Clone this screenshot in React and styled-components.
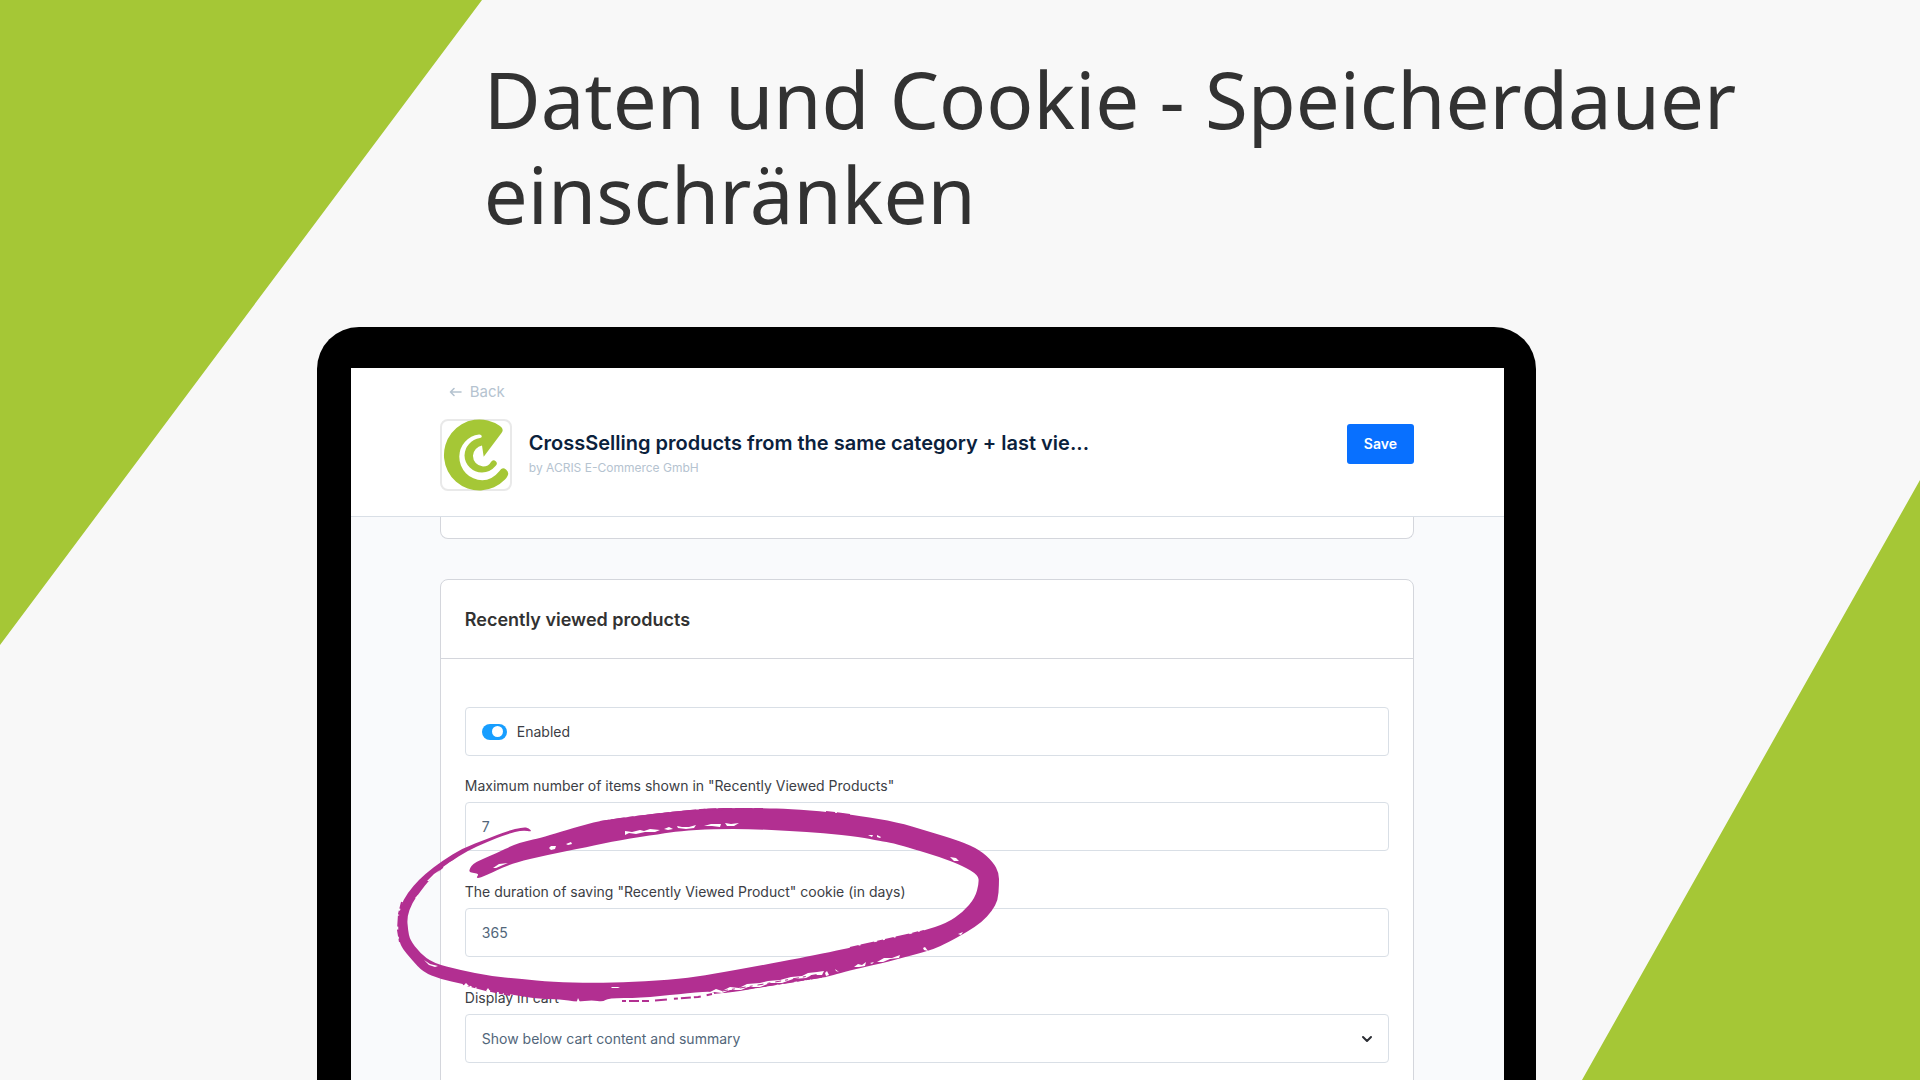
import React, { useId } from 'react'
import styled, { createGlobalStyle, css } from 'styled-components'

const color = {
  page: '#f8f8f8',
  green: '#a5c736',
  ink: '#323232',
  title: '#0b213c',
  label: '#3c3e45',
  value: '#52667a',
  muted: '#b5c3d0',
  line: '#d9dfe6',
  cardLine: '#d4d6dc',
  surface: '#f9fafc',
  save: '#0870ff',
  toggle: '#189eff',
  marker: '#b22f91'
}

const GlobalStyle = createGlobalStyle`
  *, *::before, *::after {
    box-sizing: border-box;
  }

  body {
    margin: 0;
    font-family: Inter, "Liberation Sans", sans-serif;
    background-color: ${color.page};
  }
`

const Slide = styled.main`
  position: relative;
  display: flex;
  flex-direction: column;
  height: 100vh;
  overflow: hidden;
`

const Backdrop = styled.svg`
  position: absolute;
  inset: 0;
  width: 100%;
  height: 100%;
  fill: ${color.green};
`

const Headline = styled.h1`
  position: relative;
  margin: 0;
  padding: 52px 24px 0 25.2%;
  font-family: "Noto Sans", "Open Sans", sans-serif;
  font-size: 78px;
  font-weight: 400;
  line-height: 95px;
  color: ${color.ink};
`

const Device = styled.div`
  position: relative;
  display: flex;
  flex-direction: column;
  flex: 1;
  min-height: 0;
  margin: 85px 20% 0 16.5%;
  padding: 41px 32px 0 34px;
  border-radius: 42px 42px 0 0;
  background-color: #000;
`

const Screen = styled.div`
  flex: 1;
  min-height: 0;
  overflow: hidden;
  background-color: ${color.surface};
`

const gutter = css`
  padding-left: 89px;
  padding-right: 90px;
`

const Header = styled.header`
  ${gutter}
  padding-top: 14px;
  padding-bottom: 25px;
  background-color: #fff;
  border-bottom: 1px solid ${color.line};
`

const BackLink = styled.a`
  display: inline-flex;
  align-items: center;
  gap: 8px;
  margin-left: 9px;
  font-size: 15px;
  line-height: 20px;
  color: ${color.muted};
  text-decoration: none;
  vertical-align: top;
`

const Plugin = styled.div`
  display: flex;
  align-items: flex-start;
  gap: 17px;
  margin-top: 17px;
`

const PluginIcon = styled.div`
  width: 72px;
  height: 72px;
  flex: none;
  border: 2px solid #e9e9e9;
  border-radius: 8px;

  svg {
    display: block;
    margin: -2px;
  }
`

const PluginText = styled.div`
  flex: 1;
  min-width: 0;
  padding-top: 11px;
`

const PluginTitle = styled.h2`
  margin: 0;
  font-size: 20px;
  font-weight: 600;
  line-height: 26px;
  color: ${color.title};
  white-space: nowrap;
  overflow: hidden;
  text-overflow: ellipsis;
`

const PluginAuthor = styled.p`
  margin: 2px 0 0;
  font-size: 12px;
  line-height: 20px;
  color: ${color.muted};
`

const SaveButton = styled.button`
  margin-top: 5px;
  padding: 0 17px;
  border: 0;
  border-radius: 3px;
  font: 600 14px/40px Inter, sans-serif;
  color: #fff;
  background-color: ${color.save};
  cursor: pointer;
`

const Content = styled.div`
  ${gutter}
`

const Card = styled.section`
  background-color: #fff;
  border: 1px solid ${color.cardLine};
  border-radius: 8px;
`

const CardEnd = styled(Card)`
  height: 22px;
  margin-bottom: 40px;
  border-top: 0;
  border-radius: 0 0 8px 8px;
`

const CardTitle = styled.h3`
  margin: 0;
  padding: 2px 24px 0;
  font-size: 18px;
  font-weight: 600;
  line-height: 76px;
  color: ${color.ink};
  border-bottom: 1px solid ${color.cardLine};
`

const CardBody = styled.div`
  padding: 48px 24px;
`

const box = css`
  display: block;
  width: 100%;
  height: 49px;
  padding: 0 16px;
  border: 1px solid ${color.line};
  border-radius: 4px;
  background-color: #fff;
`

const SwitchRow = styled.label`
  ${box}
  display: flex;
  align-items: center;
  gap: 10px;
  margin-bottom: 20px;
  font-size: 14px;
  color: ${color.label};
`

const Switch = styled.input.attrs({ type: 'checkbox' })`
  appearance: none;
  display: flex;
  align-items: center;
  width: 25px;
  height: 16px;
  margin: 0;
  padding: 0 4px;
  border-radius: 8px;
  background-color: ${color.muted};

  &::before {
    content: "";
    width: 11px;
    height: 11px;
    border-radius: 50%;
    background-color: #fff;
  }

  &:checked {
    justify-content: flex-end;
    background-color: ${color.toggle};
  }
`

const FieldGroup = styled.div`
  position: relative;
  margin-bottom: 31px;
`

const Label = styled.label`
  display: block;
  margin-bottom: 6px;
  font-size: 14px;
  line-height: 20px;
  color: ${color.label};
`

const value = css`
  ${box}
  font: 400 14px/20px Inter, sans-serif;
  color: ${color.value};
`

const TextInput = styled.input`
  ${value}
`

const Select = styled.select`
  ${value}
  appearance: none;
`

const SelectWrap = styled.div`
  display: grid;
  align-items: center;

  > * {
    grid-area: 1 / 1;
  }

  svg {
    justify-self: end;
    margin-right: 16px;
    pointer-events: none;
  }
`

const Marker = styled.svg`
  position: absolute;
  top: -82px;
  left: -75px;
  z-index: 1;
  pointer-events: none;
`

const Field = ({ label, children, render }) => {
  const id = useId()

  return (
    <FieldGroup>
      <Label htmlFor={id}>{label}</Label>
      {render(id)}
      {children}
    </FieldGroup>
  )
}

const Logo = () => (
  <svg width="72" height="72" viewBox="0 1 72 72" fill={color.green} aria-hidden="true">
    <path d="M60 8Q64.500 11 61.500 15L43.700 38.700L42 27.500A11 11 0 0 0 33 37.500A10.500 10.500 0 0 0 43 48.500Q48.500 48.500 51 44Q53 41 56 43.500Q58 45.500 55.500 48Q50 54.500 42 54.500A17.500 17.500 0 0 1 24.500 37.500A18 18 0 0 1 40 20Q42 19.800 41.700 18Q41.500 16.300 39 16.500A22.500 22.500 0 0 0 19.300 38.500A23.500 23.500 0 0 0 42.300 62.300Q52 62.300 59.500 53Q62 48.500 66 51.500Q69.500 54.500 67.500 58Q66 61 65 61.600A35.500 35.500 0 1 1 60 8Z" />
  </svg>
)

const ArrowLeft = () => (
  <svg width="13" height="10" viewBox="0 0 13 10" fill="none" stroke="currentColor" strokeWidth="1.600" strokeLinecap="round" strokeLinejoin="round" aria-hidden="true">
    <path d="M12 5H1.500M5 1.500L1.500 5L5 8.500" />
  </svg>
)

const Chevron = () => (
  <svg width="12" height="8" viewBox="0 0 12 8" fill="none" stroke="#2b2d33" strokeWidth="2" strokeLinecap="round" strokeLinejoin="round" aria-hidden="true">
    <path d="M2 2L6 6L10 2" />
  </svg>
)

// Outline of the marker loop: outer edge first, then back along the inner edge
const loop = [
  [469, 872], [470, 868], [473, 864], [480, 860], [497, 853], [513, 845], [526, 841], [540, 838],
  [560, 832], [587, 824], [600, 821], [620, 818], [660, 813], [700, 809], [723, 808], [763, 808],
  [790, 809], [830, 812], [860, 816], [897, 822], [927, 831], [960, 841], [980, 850],
  [993, 862], [999, 873], [999, 885], [998, 900], [992, 911], [982, 922], [967, 932],
  [947, 943], [934, 949], [920, 953], [887, 962], [860, 968], [840, 973], [827, 977], [793, 982],
  [763, 987], [740, 991], [717, 994], [711, 991], [680, 994], [640, 998], [608, 998],
  [603, 1002], [592, 1000], [577, 1002], [560, 999], [540, 999], [513, 995], [487, 990], [463, 984],
  [440, 979], [423, 972], [412, 960], [402, 948], [399, 940], [398, 930], [399, 913], [403, 900],
  [413, 886], [425, 874], [442, 861], [463, 848], [487, 839], [507, 831], [523, 827],
  [529, 828], [532, 832], [523, 830], [507, 834], [487, 842], [467, 851], [450, 862],
  [430, 879], [420, 892], [412, 903], [407, 917], [408, 930], [410, 940], [420, 953],
  [433, 963], [460, 970], [490, 976], [520, 979], [553, 982], [593, 983], [633, 982],
  [680, 979], [713, 974], [763, 965], [800, 958], [830, 952], [853, 947], [893, 938],
  [923, 931], [947, 923], [963, 912], [975, 898], [979, 883], [978, 875], [963, 866],
  [940, 857], [913, 849], [893, 843], [880, 841], [860, 837], [823, 833], [790, 831],
  [753, 829], [713, 829], [680, 831], [660, 834], [620, 840], [587, 847], [547, 855],
  [513, 863], [493, 872], [480, 878], [476, 878], [479, 874], [474, 873]
]

const smooth = points => {
  const mid = (a, b) => `${(a[0] + b[0]) / 2} ${(a[1] + b[1]) / 2}`
  const last = points[points.length - 1]
  const curves = points.map((p, i) =>
    `Q${p[0]} ${p[1]} ${mid(p, points[(i + 1) % points.length])}`
  )
  return `M${mid(last, points[0])}${curves.join('')}Z`
}

const MarkerLoop = () => (
  <Marker width="620" height="210" viewBox="390 800 620 210" fill="none" aria-hidden="true">
    <path d={smooth(loop)} fill={color.marker} />
    {/* bristle marks along the rims */}
    <g stroke={color.marker}>
      <path strokeWidth="2" strokeDasharray="9 2 14 3 6 2" d="M600 822L620 819L660 814L700 810L724 809L763 809M826 812L850 815M850 948L894 938L924 931" />
      <path strokeWidth="2" strokeDasharray="4 3 10 3 7 6 12 7" d="M622 1001L648 1001L672 999L698 997L712 994" />
      <path strokeWidth="2" strokeDasharray="7 2 4 1 11 3" d="M714 993L764 986L826 976M402 902L399 914L398 930L400 942M463 984L486 990L510 995" />
    </g>
    <g fill="#fff">
      <path d="M549 848L551 846L556 846L555 849L551 850ZM566 844L571 842L572 844L568 845Z" />
      <path d="M493 868L499 864L508 863L503 865L496 868Z" />
      <path d="M625 831L632 832L640 830L644 831L650 829L660 830L655 832L645 832L636 834L629 833L625 835Z" />
      <path d="M664 829L669 827L673 829L668 830ZM677 826L682 827L689 827L696 825L694 828L686 829L678 828Z" />
      <path d="M704 826L711 824L721 824L720 827L712 826ZM725 823L731 824L739 823L734 826L727 826Z" />
      <path d="M868 835L873 835L872 837ZM877 835L881 837L880 838L877 837ZM950 857L956 858L959 861L954 861Z" />
      <path d="M854 967L858 964L862 965L866 962L865 966L859 967ZM870 963L874 962L872 964ZM877 962L884 958L892 958L900 955L899 958L890 959L883 962Z" />
      <path d="M923 948L925 947L928 951L924 950ZM958 934L963 932L961 935ZM611 987L620 987L618 988L612 988Z" />
      <path d="M424 960L430 964L438 966L435 967L429 965Z" />
      <path d="M427 881L434 874L440 870L436 875L429 881ZM443 867L450 862L460 857L452 863L444 869ZM415 898L418 895L418 899Z" />
      <path d="M710 992L716 989L722 991L730 987L739 988L747 984L760 983L768 981L780 980L791 977L802 976L808 973L817 972L824 971L822 975L812 975L806 978L793 979L782 983L770 983L760 987L748 987L741 990L730 990L722 993L714 992Z" />
      <path d="M825 973L827 971L829 975L826 976ZM835 969L839 972L836 971Z" />
      <path d="M463 986L466 983L469 986ZM486 991L488 988L490 991ZM576 1004L578 998L581 1004Z" />
    </g>
    <path stroke={color.marker} strokeWidth="1" strokeDasharray="6 4 3 5" d="M722 991L764 984L820 974" />
  </Marker>
)

export default () => (
  <>
    <GlobalStyle />
    <Slide>
      <Backdrop viewBox="0 0 1920 1080" preserveAspectRatio="none" aria-hidden="true">
        <path d="M0 0H482L0 645ZM1920 480V1080H1582Z" />
      </Backdrop>
      <Headline>Daten und Cookie - Speicherdauer einschränken</Headline>
      <Device>
        <Screen>
          <Header>
            <BackLink href="#back">
              <ArrowLeft />
              Back
            </BackLink>
            <Plugin>
              <PluginIcon>
                <Logo />
              </PluginIcon>
              <PluginText>
                <PluginTitle>CrossSelling products from the same category + last vie...</PluginTitle>
                <PluginAuthor>by ACRIS E-Commerce GmbH</PluginAuthor>
              </PluginText>
              <SaveButton type="button">Save</SaveButton>
            </Plugin>
          </Header>
          <Content>
            <CardEnd />
            <Card>
              <CardTitle>Recently viewed products</CardTitle>
              <CardBody>
                <SwitchRow>
                  <Switch defaultChecked />
                  Enabled
                </SwitchRow>
                <Field
                  label={'Maximum number of items shown in "Recently Viewed Products"'}
                  render={id => <TextInput id={id} defaultValue="7" />}
                />
                <Field
                  label={'The duration of saving "Recently Viewed Product" cookie (in days)'}
                  render={id => <TextInput id={id} defaultValue="365" />}
                >
                  <MarkerLoop />
                </Field>
                <Field
                  label="Display in cart"
                  render={id => (
                    <SelectWrap>
                      <Select id={id}>
                        <option>Show below cart content and summary</option>
                      </Select>
                      <Chevron />
                    </SelectWrap>
                  )}
                />
              </CardBody>
            </Card>
          </Content>
        </Screen>
      </Device>
    </Slide>
  </>
)
